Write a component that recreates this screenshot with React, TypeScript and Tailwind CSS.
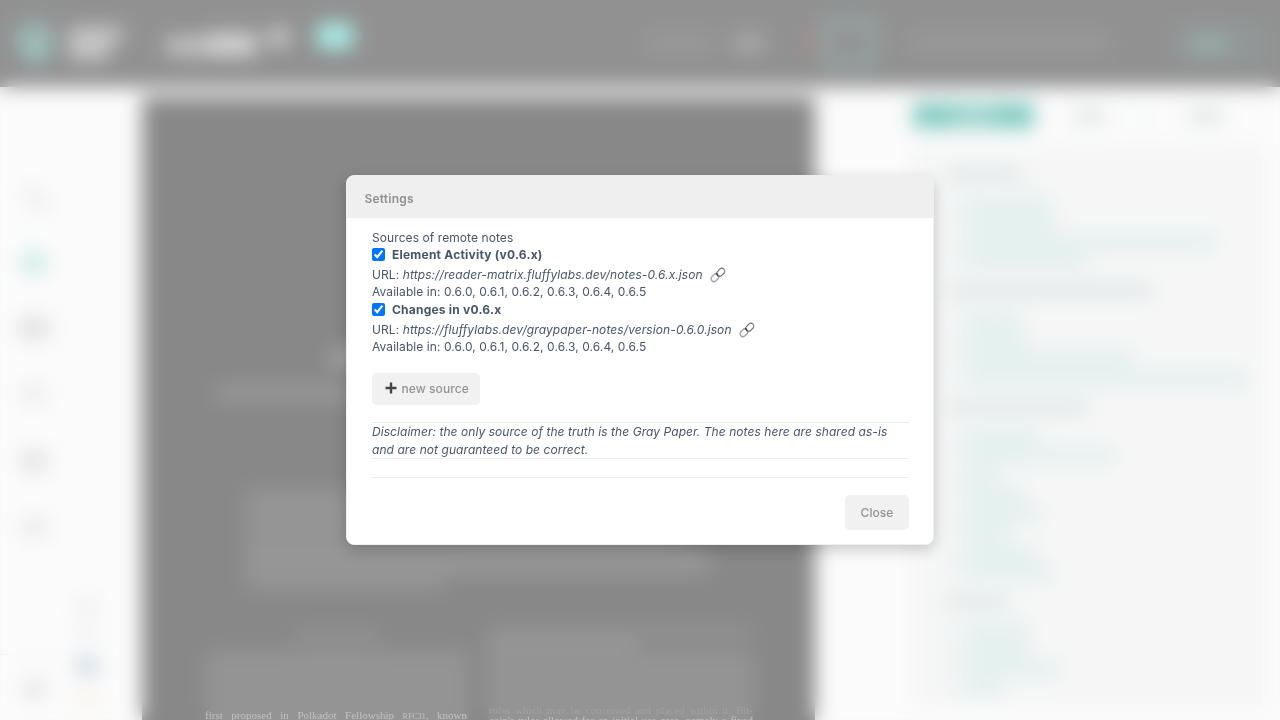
type TocRow = { head?: boolean; w: number };

const toc: TocRow[] = [
  { head: true, w: 74 }, { w: 79 }, { w: 87 }, { w: 245 }, { w: 116 },
  { head: true, w: 204 }, { w: 51 }, { w: 58 }, { w: 163 }, { w: 276 },
  { head: true, w: 140 }, { w: 69 }, { w: 144 }, { w: 29 }, { w: 55 }, { w: 72 }, { w: 40 }, { w: 66 }, { w: 82 },
  { head: true, w: 60 }, { w: 59 }, { w: 59 }, { w: 90 }, { w: 32 },
];

const sources = [
  { name: "Element Activity (v0.6.x)", url: "https://reader-matrix.fluffylabs.dev/notes-0.6.x.json" },
  { name: "Changes in v0.6.x", url: "https://fluffylabs.dev/graypaper-notes/version-0.6.0.json" },
];

function LinkIcon() {
  return (
    <svg width="16" height="16" viewBox="0 0 16 16" fill="none" className="ml-[7px] shrink-0">
      <rect x="-4.4" y="-2.9" width="8.8" height="5.8" rx="2.9" transform="translate(5 10.7) rotate(-45)" stroke="#9ba2af" strokeWidth="1.3" />
      <rect x="-4.4" y="-2.9" width="8.8" height="5.8" rx="2.9" transform="translate(10.8 5.3) rotate(-45)" stroke="#7b7273" strokeWidth="1.2" />
      <path d="M6.6 6.4 7.8 8.8" stroke="#4c4446" strokeWidth="1.4" strokeLinecap="round" />
    </svg>
  );
}

function TopBar() {
  return (
    <header className="flex h-[87px] shrink-0 items-start bg-[#919191] font-['Inter',sans-serif]">
      <svg width="44" height="46" viewBox="0 0 44 46" className="mt-[19px] ml-[14px]">
        <path d="M20 0 38 7 43 22 32 41 22 46 12 41 0 24 3 8Z" fill="#9bb3b0" />
        <path d="M8 27 22 18 36 27 30 41 22 46 14 41Z" fill="#9fc4bf" />
      </svg>
      <div className="mt-[26px] ml-[11px] flex flex-col">
        <div className="h-[17px] w-[54px] bg-[#c4c4c4]" />
        <div className="h-[17px] w-[40px] bg-[#c8c8c8]" />
      </div>
      <div className="mt-[33px] ml-[43px] flex items-center">
        <div className="mt-[2px] h-[18px] w-[42px] bg-[#c6c6c6]" />
        <div className="h-[23px] w-[49px] bg-[#d4d4d4]" />
      </div>
      <div className="mt-[26px] ml-[11px] h-[22px] w-[22px] rounded-full bg-[#cdcdcd]" />
      <div className="mt-[23px] ml-[27px] h-[26px] w-[36px] rounded bg-[#aaf0e9]" />
      <div className="mt-[36px] ml-[292px] h-[14px] w-[70px] bg-[#9c9c9c]" />
      <div className="mt-[34px] ml-[18px] h-[18px] w-[32px] bg-[#aaa]" />
      <div className="mt-[35px] ml-[38px] h-[15px] w-[10px] bg-[#b48c8c]" />
      <div className="mt-[18px] ml-[9px] h-[50px] w-[55px] rounded-lg border-[10px] border-[#98a8a7]" />
      <div className="mt-[36px] ml-[33px] h-[14px] w-[200px] bg-[#9c9c9c]" />
      <div className="mt-[27px] ml-[67px] flex h-[34px] w-[83px] items-center rounded border-[3px] border-[#93a3a0] bg-[#919797] pl-[12px]">
        <div className="h-[16px] w-[34px] bg-[#9bb0ac]" />
      </div>
    </header>
  );
}

function Rail() {
  return (
    <div className="flex w-[142px] shrink-0">
      <div className="flex w-[67px] flex-col items-center pt-[97px]">
        <svg width="36" height="28" viewBox="0 0 36 28">
          <circle cx="14" cy="9" r="9" fill="#f1f1f1" />
          <circle cx="25" cy="19" r="8" fill="#eaeaea" />
        </svg>
        <div className="mt-[41px] h-[20px] w-[26px] rounded bg-[#c9ebe5]" />
        <div className="mt-[45px] h-[20px] w-[30px] rounded bg-[#dedede]" />
        <div className="mt-[47px] h-[18px] w-[24px] rounded bg-[#ebebeb]" />
        <div className="mt-[48px] h-[20px] w-[26px] rounded bg-[#e0e0e0]" />
        <div className="mt-[46px] h-[20px] w-[30px] rounded-full bg-[#eaeaea]" />
        <div className="mt-[117px] h-px w-full bg-[#ededed]" />
        <div className="mt-[24px] h-[20px] w-[24px] rounded-full bg-[#e4e4e4]" />
      </div>
      <div className="flex w-[40px] flex-col items-center pt-[512px]">
        <div className="h-[16px] w-[18px] bg-[#ebeded]" />
        <div className="mt-[10px] h-[16px] w-[18px] bg-[#f1f1f1]" />
        <div className="mt-[16px] h-[18px] w-[22px] bg-[#cdd8e2]" />
        <div className="mt-[16px] h-[16px] w-[24px] bg-[#f8f4ee]" />
      </div>
    </div>
  );
}

function Paper() {
  return (
    <div className="mt-[10px] h-[623px] w-[673px] shrink-0 overflow-hidden bg-[#888]">
      <div className="mt-[250px] ml-[192px] h-[20px] w-[280px] -skew-x-[30deg] bg-[#acacac]" />
      <div className="mt-[19px] ml-[74px] h-[14px] w-[520px] bg-[#9b9b9b]" />
      <div className="mt-[89px] ml-[104px] h-[58px] w-[440px] bg-[#959595]" />
      <div className="ml-[104px] h-[28px] w-[465px] bg-[#969696]" />
      <div className="ml-[104px] h-[15px] w-[200px] bg-[#959595]" />
      <div className="mt-[40px] flex pl-[64px]">
        <div className="w-[262px]">
          <div className="mx-auto h-[11px] w-[80px] bg-[#959595]" />
          <div className="mt-[9px] h-[90px] bg-[#949494]" />
        </div>
        <div className="ml-[20px] w-[265px] -translate-y-[4px]">
          <div className="h-[13px] bg-[#939393]" />
          <div className="h-[12px] w-[150px] bg-[#969696]" />
          <div className="h-[90px] bg-[#949494]" />
        </div>
      </div>
    </div>
  );
}

function Contents() {
  return (
    <aside className="ml-[97px] flex w-[354px] shrink-0 flex-col pt-[15px]">
      <div className="flex h-[27px] rounded border border-[#f1f6f6]">
        <div className="flex w-[121px] items-center justify-center bg-[#7fcac0]">
          <div className="h-[14px] w-[42px] bg-[#a9d8d1]" />
        </div>
        <div className="flex w-[113px] items-center justify-center border-r-2 border-[#e6f0f0]">
          <div className="h-[14px] w-[32px] bg-[#e1e5e5]" />
        </div>
        <div className="flex flex-1 items-center justify-center">
          <div className="h-[14px] w-[36px] bg-[#e1e5e5]" />
        </div>
      </div>
      <div className="mt-[17px] h-[561px] bg-[#f6f6f6] pt-[9px] pl-[20px]">
        {toc.map((row, i) =>
          row.head ? (
            <div key={i} className="my-[9.5px] flex h-[19.5px] items-center">
              <div className="h-[12px] w-[10px] bg-[#eef2f2]" />
              <div className="ml-[6px] h-[13px] bg-[#dfe6e6]" style={{ width: row.w }} />
            </div>
          ) : (
            <div key={i} className="flex h-[19.5px] items-center pl-[16px]">
              <div className="h-[15px] w-[22px] bg-[#ecf2f2]" />
              <div className="h-[15px] bg-[#e0efed]" style={{ width: row.w }} />
            </div>
          ),
        )}
      </div>
    </aside>
  );
}

function SettingsDialog() {
  return (
    <section className="flex h-[370px] w-[588px] flex-col overflow-hidden rounded-lg border border-[#efefef] bg-white text-[12px] leading-[18px] tracking-[0.08px] text-[#475569] shadow-[0_5px_15px_rgba(0,0,0,0.2)]">
      <h1 className="flex h-[42px] shrink-0 items-center bg-[#efefef] pt-[4px] pl-[17.5px] font-semibold tracking-[0.2px] text-[#8f8f8f]">Settings</h1>
      <div className="flex flex-col pt-[11px] pr-[24px] pl-[25px]">
        <p className="h-[17px]">Sources of remote notes</p>
        {sources.map((s) => (
          <div key={s.url} className="h-[55px]">
            <label className="mb-[2px] flex h-[18px] items-start gap-[7px] font-bold tracking-[0.22px]">
              <input type="checkbox" defaultChecked className="mt-[2px] h-[13px] w-[13px]" />
              {s.name}
            </label>
            <p className="flex h-[18px] items-center tracking-[0.09px]">
              URL:&nbsp;<i>{s.url}</i>
              <LinkIcon />
            </p>
            <p className="h-[17px] leading-[16px]">Available in: 0.6.0, 0.6.1, 0.6.2, 0.6.3, 0.6.4, 0.6.5</p>
          </div>
        ))}
        <button className="mt-[17px] flex h-[32px] w-[108px] items-center rounded-[5px] bg-[#f1f1f1] pl-[13px] font-medium text-[#929292]">
          <svg width="12" height="12" viewBox="0 0 12 12" className="mr-[4.5px] -translate-y-[1px]">
            <path d="M6 .5v11M.5 6h11" stroke="#444" strokeWidth="2.4" />
          </svg>
          new source
        </button>
        <p className="mt-[17px] h-[37px] border-y border-[#ebebeb] tracking-[0.06px] italic">
          Disclaimer: the only source of the truth is the Gray Paper. The notes here are shared as-is and are not guaranteed to be correct.
        </p>
        <hr className="mt-[18px] border-[#ebebeb]" />
        <button className="mt-[17px] h-[35px] w-[64px] self-end rounded-[5px] bg-[#f1f1f1] font-medium text-[#929292]">Close</button>
      </div>
    </section>
  );
}

export default function App() {
  return (
    <div className="relative h-[720px] w-[1280px] overflow-hidden bg-[#fbfbfb] font-['Inter',sans-serif]">
      <div className="flex h-full flex-col">
        <TopBar />
        <main className="flex min-h-0 flex-1 overflow-hidden">
          <Rail />
          <Paper />
          <Contents />
        </main>
      </div>
      <div className="absolute inset-0 flex items-center justify-center backdrop-blur-[10px]">
        <SettingsDialog />
      </div>
      <div className="absolute inset-x-0 bottom-0 flex h-[16px] items-start overflow-hidden pl-[205px] font-['Liberation_Serif',serif] text-[11px] leading-[12px] text-[#c2c2c2]">
        <p className="mt-[5px] w-[262px] text-justify [text-align-last:justify]">first proposed in Polkadot Fellowship <span className="text-[8px]">RFC31</span>, known</p>
        <div className="ml-[22px] w-[264px]">
          <p className="h-[10px] text-justify text-[#a1a1a1] [text-align-last:justify]">rules which may be conceived and placed within it. Bit-</p>
          <p className="text-justify [text-align-last:justify]">coin's rules allowed for an initial use case, namely a fixed</p>
        </div>
      </div>
    </div>
  );
}
